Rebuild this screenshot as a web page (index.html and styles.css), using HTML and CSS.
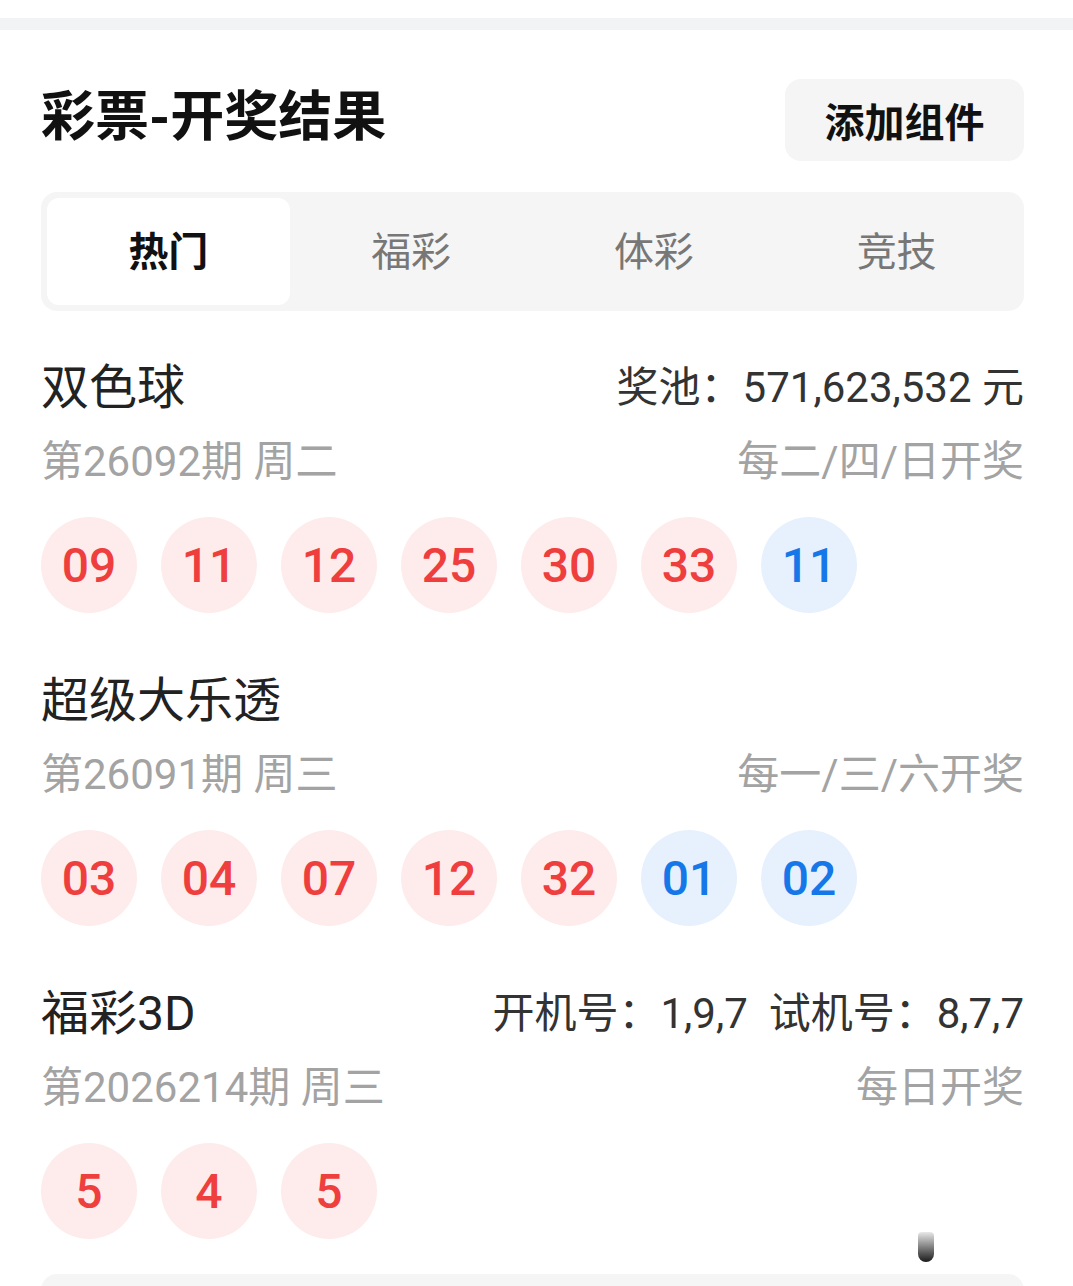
FILE: index.html
```html
<!DOCTYPE html>
<html lang="zh-CN">
<head>
    <meta charset="UTF-8">
    <meta name="viewport" content="width=device-width, initial-scale=1.0">
    <title>彩票-开奖结果</title>
    <link rel="stylesheet" href="styles.css">
</head>
<body>
    <div class="top-gap"></div>
    <div class="top-band"></div>

    <main class="card">
        <header class="head">
            <h1>彩票-开奖结果</h1>
            <button class="add-btn">添加组件</button>
        </header>

        <nav class="tabs">
            <a href="#" class="tab current">热门</a>
            <a href="#" class="tab">福彩</a>
            <a href="#" class="tab">体彩</a>
            <a href="#" class="tab">竞技</a>
        </nav>

        <!-- 双色球 -->
        <section class="lotto first">
            <div class="row">
                <h2>双色球</h2>
                <span class="info">奖池：571,623,532 元</span>
            </div>
            <div class="row sub">
                <span>第26092期 周二</span>
                <span>每二/四/日开奖</span>
            </div>
            <div class="balls">
                <span class="ball">09</span>
                <span class="ball">11</span>
                <span class="ball">12</span>
                <span class="ball">25</span>
                <span class="ball">30</span>
                <span class="ball">33</span>
                <span class="ball blue">11</span>
            </div>
        </section>

        <!-- 超级大乐透 -->
        <section class="lotto">
            <div class="row">
                <h2>超级大乐透</h2>
            </div>
            <div class="row sub">
                <span>第26091期 周三</span>
                <span>每一/三/六开奖</span>
            </div>
            <div class="balls">
                <span class="ball">03</span>
                <span class="ball">04</span>
                <span class="ball">07</span>
                <span class="ball">12</span>
                <span class="ball">32</span>
                <span class="ball blue">01</span>
                <span class="ball blue">02</span>
            </div>
        </section>

        <!-- 福彩3D -->
        <section class="lotto">
            <div class="row">
                <h2>福彩3D</h2>
                <span class="info">开机号：1,9,7&nbsp;&nbsp;试机号：8,7,7</span>
            </div>
            <div class="row sub">
                <span>第2026214期 周三</span>
                <span>每日开奖</span>
            </div>
            <div class="balls">
                <span class="ball">5</span>
                <span class="ball">4</span>
                <span class="ball">5</span>
            </div>
        </section>

        <div class="next-card"></div>
        <div class="scroll-mark"></div>
    </main>
</body>
</html>
```

FILE: styles.css
```css
/* Reset */
* { margin: 0; padding: 0; box-sizing: border-box; }

body {
    font-family: Roboto, "Noto Sans CJK SC", sans-serif;
    background: #ffffff;
    color: #222;
    overflow: hidden;
}

.top-gap {
    height: 18px;
    background: #ffffff;
}

.top-band {
    height: 12px;
    background: #f2f3f5;
}

/* Carte principale */
.card {
    position: relative;
    background: #ffffff;
    padding: 49px 49px 0 41px;
}

.head {
    display: flex;
    justify-content: space-between;
    align-items: center;
}

.head h1 {
    font-size: 54px;
    font-weight: 700;
    color: #111;
    line-height: 1;
    margin-top: -4px;
}

.add-btn {
    width: 239px;
    height: 82px;
    border: none;
    border-radius: 16px;
    background: #f5f5f5;
    font-family: "Noto Sans CJK SC", sans-serif;
    font-size: 40px;
    font-weight: 700;
    color: #111;
}

/* Onglets */
.tabs {
    margin-top: 31px;
    height: 119px;
    padding: 6px;
    display: grid;
    grid-template-columns: repeat(4, 1fr);
    background: #f5f5f5;
    border-radius: 16px;
}

.tab {
    display: flex;
    align-items: center;
    justify-content: center;
    padding-bottom: 6px;
    font-size: 40px;
    color: #777;
    text-decoration: none;
    border-radius: 12px;
}

.tab.current {
    background: #ffffff;
    color: #111;
    font-weight: 700;
}

/* Sections */
.lotto {
    margin-top: 53px;
}

.lotto.first {
    margin-top: 42px;
}

.row {
    display: flex;
    justify-content: space-between;
    align-items: center;
    height: 60px;
}

.row h2 {
    font-size: 48px;
    font-weight: 400;
    color: #222;
}

.info {
    font-size: 42px;
    color: #333;
}

.row.sub {
    margin-top: 16px;
    height: 56px;
    font-size: 42px;
    color: #a3a3a3;
}

.balls {
    margin-top: 32px;
    display: flex;
    gap: 24px;
}

.ball {
    width: 96px;
    height: 96px;
    border-radius: 50%;
    display: flex;
    align-items: center;
    justify-content: center;
    background: #fdeceb;
    color: #ef3e3e;
    font-size: 48px;
    font-weight: 500;
}

.ball.blue {
    background: #e6f1fd;
    color: #1677e8;
}

.next-card {
    margin-top: 35px;
    height: 60px;
    background: #f5f5f5;
    border-radius: 16px 16px 0 0;
}

/* petit repère de défilement */
.scroll-mark {
    position: absolute;
    left: 918px;
    top: 1202px;
    width: 16px;
    height: 30px;
    border-radius: 4px 4px 8px 8px;
    background: linear-gradient(#e8e8e8, #1a1a1a);
}
```
